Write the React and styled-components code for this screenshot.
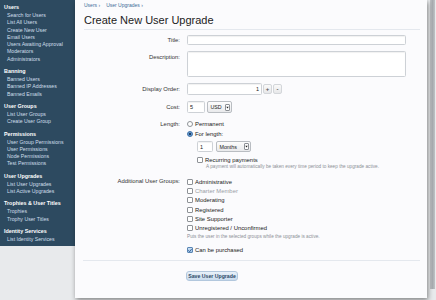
import React from "react";
import styled, { createGlobalStyle, css } from "styled-components";

const Global = createGlobalStyle`
  html, body { margin: 0; padding: 0; background: #e8eaec; }
  body { font-family: "Liberation Sans", Arial, sans-serif; width: 436px; height: 300px; overflow: hidden; }
  * { box-sizing: border-box; }
`;

const Page = styled.div`
  display: flex;
  align-items: flex-start;
  width: 436px;
  height: 300px;
`;

const Sidebar = styled.nav`
  width: 75px;
  flex: none;
  background: #2d4a60;
  padding: 3px 0 3px 0;
  display: flex;
  flex-direction: column;
  gap: 4px;
`;

const Section = styled.div`
  display: flex;
  flex-direction: column;
`;

const SectionHead = styled.div`
  font-size: 5.4px;
  font-weight: bold;
  color: #ffffff;
  line-height: 9px;
  padding-left: 4px;
  white-space: nowrap;
`;

const NavItem = styled.div`
  font-size: 5.2px;
  color: #cfdfeb;
  line-height: 7.3px;
  padding-left: 7px;
  white-space: nowrap;
`;

const Panel = styled.main`
  width: 352px;
  flex: none;
  background: #fbfbfd;
  padding: 1px 7px 16px 9px;
  box-shadow: 1px 2px 5px rgba(0, 0, 0, 0.45);
  position: relative;
  z-index: 1;
`;

const Strip = styled.div`
  width: 5px;
  height: 289px;
  margin-left: 3px;
  background: linear-gradient(to right, #c2c5c8, #a8acb0 50%, #bfc2c5);
`;

const Breadcrumb = styled.div`
  font-size: 5px;
  line-height: 8px;
  color: #3d6b98;
  display: flex;
  gap: 6px;
`;

const Title = styled.h1`
  margin: 4px 0 0 0;
  font-size: 11px;
  line-height: 14px;
  font-weight: normal;
  color: #222;
  padding-bottom: 2px;
  border-bottom: 1px solid #e4e8ee;
`;

const Form = styled.div`
  display: grid;
  grid-template-columns: 96px 1fr;
  column-gap: 7px;
  padding-top: 5px;
`;

const Label = styled.div`
  font-size: 5.9px;
  color: #333;
  text-align: right;
  line-height: ${(p) => p.$lh || 10}px;
  margin-top: ${(p) => p.$mt || 0}px;
  white-space: nowrap;
`;

const Control = styled.div`
  margin-top: ${(p) => p.$mt || 0}px;
  display: flex;
  flex-direction: column;
`;

const fieldBase = css`
  background: #fff;
  border: 1px solid #cdd1d6;
  border-radius: 1.5px;
  box-shadow: inset 0 1px 1px rgba(0, 0, 0, 0.06);
  font-size: 5.5px;
  color: #222;
  font-family: "Liberation Sans", Arial, sans-serif;
`;

const TextInput = styled.div`
  ${fieldBase};
  width: ${(p) => p.$w}px;
  height: ${(p) => p.$h || 10}px;
  padding: 0 2px;
  display: flex;
  align-items: center;
  justify-content: ${(p) => (p.$right ? "flex-end" : "flex-start")};
`;

const InlineRow = styled.div`
  display: flex;
  align-items: center;
  gap: ${(p) => p.$gap || 2}px;
  margin-left: ${(p) => p.$ml || 0}px;
  margin-top: ${(p) => p.$mt || 0}px;
`;

const SpinButton = styled.div`
  width: 9px;
  height: 10px;
  border: 1px solid #d3d6da;
  border-radius: 2px;
  background: linear-gradient(#fafafa, #e6e7e9);
  font-size: 6px;
  font-weight: bold;
  color: #555;
  display: flex;
  align-items: center;
  justify-content: center;
`;

const Select = styled.div`
  width: ${(p) => p.$w}px;
  height: ${(p) => p.$h || 12}px;
  border: 1px solid #b9bdc2;
  border-radius: 2px;
  background: linear-gradient(#fdfdfd, #e9eaec);
  font-size: 5.3px;
  color: #222;
  display: flex;
  align-items: center;
  justify-content: space-between;
  padding: 0 1.5px 0 2.5px;
`;

const ArrowBox = styled.span`
  width: 5px;
  height: 7px;
  border: 1px solid #8d9196;
  border-radius: 1px;
  background: #fff;
  display: flex;
  align-items: center;
  justify-content: center;
`;

const OptionRow = styled.label`
  display: flex;
  align-items: center;
  gap: 2px;
  height: ${(p) => p.$h || 9}px;
  font-size: 5.9px;
  color: ${(p) => (p.$muted ? "#9aa0a6" : "#222")};
  margin-top: ${(p) => p.$mt || 0}px;
  margin-left: ${(p) => p.$ml || 0}px;
  white-space: nowrap;
`;

const Radio = styled.span`
  width: 6px;
  height: 6px;
  border-radius: 50%;
  border: 1px solid ${(p) => (p.$on ? "#3a6ea5" : "#8e9297")};
  background: ${(p) => (p.$on ? "radial-gradient(circle, #1f3f66 0 1.2px, #6a9fd6 1.6px)" : "#fff")};
  flex: none;
`;

const Check = styled.span`
  width: 6px;
  height: 6px;
  border-radius: 1px;
  border: 1px solid ${(p) => (p.$on ? "#5a86b4" : "#8e9297")};
  background: ${(p) => (p.$on ? "linear-gradient(#cfe2f5, #9ec2e6)" : "#fff")};
  flex: none;
  display: flex;
  align-items: center;
  justify-content: center;
`;

const Hint = styled.div`
  font-size: 4.7px;
  color: #8b9096;
  line-height: ${(p) => p.$lh || 6}px;
  margin-left: ${(p) => p.$ml || 0}px;
  white-space: nowrap;
`;

const Divider = styled.div`
  border-top: 1px solid #e4e8ee;
  margin-top: 5.5px;
  margin-left: -1px;
`;

const ButtonRow = styled.div`
  padding-left: 102px;
  margin-top: 3px;
`;

const SaveButton = styled.div`
  display: inline-flex;
  align-items: center;
  justify-content: center;
  width: 52px;
  height: 10px;
  border: 1px solid #b2c7dd;
  border-radius: 3px;
  background: linear-gradient(#e9f1f9, #c9dbed);
  font-size: 5.2px;
  color: #2b4866;
  font-weight: bold;
`;

const Tick = () => (
  <svg width="5" height="5" viewBox="0 0 10 10">
    <path d="M1.5 5.2 L4 7.8 L8.8 1.8" fill="none" stroke="#1f4f86" strokeWidth="2" strokeLinecap="round" strokeLinejoin="round" />
  </svg>
);

const Arrow = () => (
  <svg width="3" height="3" viewBox="0 0 6 6">
    <path d="M0.5 1.5 L5.5 1.5 L3 5 Z" fill="#222" />
  </svg>
);

const nav = [
  ["Users", ["Search for Users", "List All Users", "Create New User", "Email Users", "Users Awaiting Approval", "Moderators", "Administrators"]],
  ["Banning", ["Banned Users", "Banned IP Addresses", "Banned Emails"]],
  ["User Groups", ["List User Groups", "Create User Group"]],
  ["Permissions", ["User Group Permissions", "User Permissions", "Node Permissions", "Test Permissions"]],
  ["User Upgrades", ["List User Upgrades", "List Active Upgrades"]],
  ["Trophies & User Titles", ["Trophies", "Trophy User Titles"]],
  ["Identity Services", ["List Identity Services"]],
];

const groups = [
  ["Administrative", false],
  ["Charter Member", true],
  ["Moderating", false],
  ["Registered", false],
  ["Site Supporter", false],
  ["Unregistered / Unconfirmed", false],
];

export default function App() {
  return (
    <>
      <Global />
      <Page>
        <Sidebar>
          {nav.map(([head, items]) => (
            <Section key={head}>
              <SectionHead>{head}</SectionHead>
              {items.map((i) => (
                <NavItem key={i}>{i}</NavItem>
              ))}
            </Section>
          ))}
        </Sidebar>
        <Panel>
          <Breadcrumb>
            <span>Users ›</span>
            <span>User Upgrades ›</span>
          </Breadcrumb>
          <Title>Create New User Upgrade</Title>
          <Form>
            <Label $lh={10}>Title:</Label>
            <Control>
              <TextInput $w={219} $h={10} />
            </Control>

            <Label $lh={12} $mt={6}>Description:</Label>
            <Control $mt={6}>
              <TextInput $w={219} $h={26} />
            </Control>

            <Label $lh={12} $mt={6}>Display Order:</Label>
            <Control $mt={6}>
              <InlineRow $gap={1}>
                <TextInput $w={75} $h={12} $right>1</TextInput>
                <SpinButton>+</SpinButton>
                <SpinButton>-</SpinButton>
              </InlineRow>
            </Control>

            <Label $lh={12} $mt={6}>Cost:</Label>
            <Control $mt={6}>
              <InlineRow $gap={2}>
                <TextInput $w={18} $h={12}>5</TextInput>
                <Select $w={25}>
                  USD <ArrowBox><Arrow /></ArrowBox>
                </Select>
              </InlineRow>
            </Control>

            <Label $lh={10} $mt={6}>Length:</Label>
            <Control $mt={6}>
              <OptionRow $h={10}>
                <Radio />
                Permanent
              </OptionRow>
              <OptionRow $h={10}>
                <Radio $on />
                For length:
              </OptionRow>
              <InlineRow $ml={10} $mt={2} $gap={3}>
                <TextInput $w={16} $h={11}>1</TextInput>
                <Select $w={35} $h={11}>
                  Months <ArrowBox><Arrow /></ArrowBox>
                </Select>
              </InlineRow>
              <OptionRow $ml={10} $mt={3}>
                <Check />
                Recurring payments
              </OptionRow>
              <Hint $ml={19}>A payment will automatically be taken every time period to keep the upgrade active.</Hint>
            </Control>

            <Label $lh={9.2} $mt={7.4}>Additional User Groups:</Label>
            <Control $mt={7.4}>
              {groups.map(([g, muted]) => (
                <OptionRow key={g} $h={9.2} $muted={muted}>
                  <Check />
                  {g}
                </OptionRow>
              ))}
              <Hint $lh={7}>Puts the user in the selected groups while the upgrade is active.</Hint>
              <OptionRow $mt={6}>
                <Check $on>
                  <Tick />
                </Check>
                Can be purchased
              </OptionRow>
            </Control>
          </Form>
          <Divider />
          <ButtonRow>
            <SaveButton>Save User Upgrade</SaveButton>
          </ButtonRow>
        </Panel>
        <Strip />
      </Page>
    </>
  );
}
